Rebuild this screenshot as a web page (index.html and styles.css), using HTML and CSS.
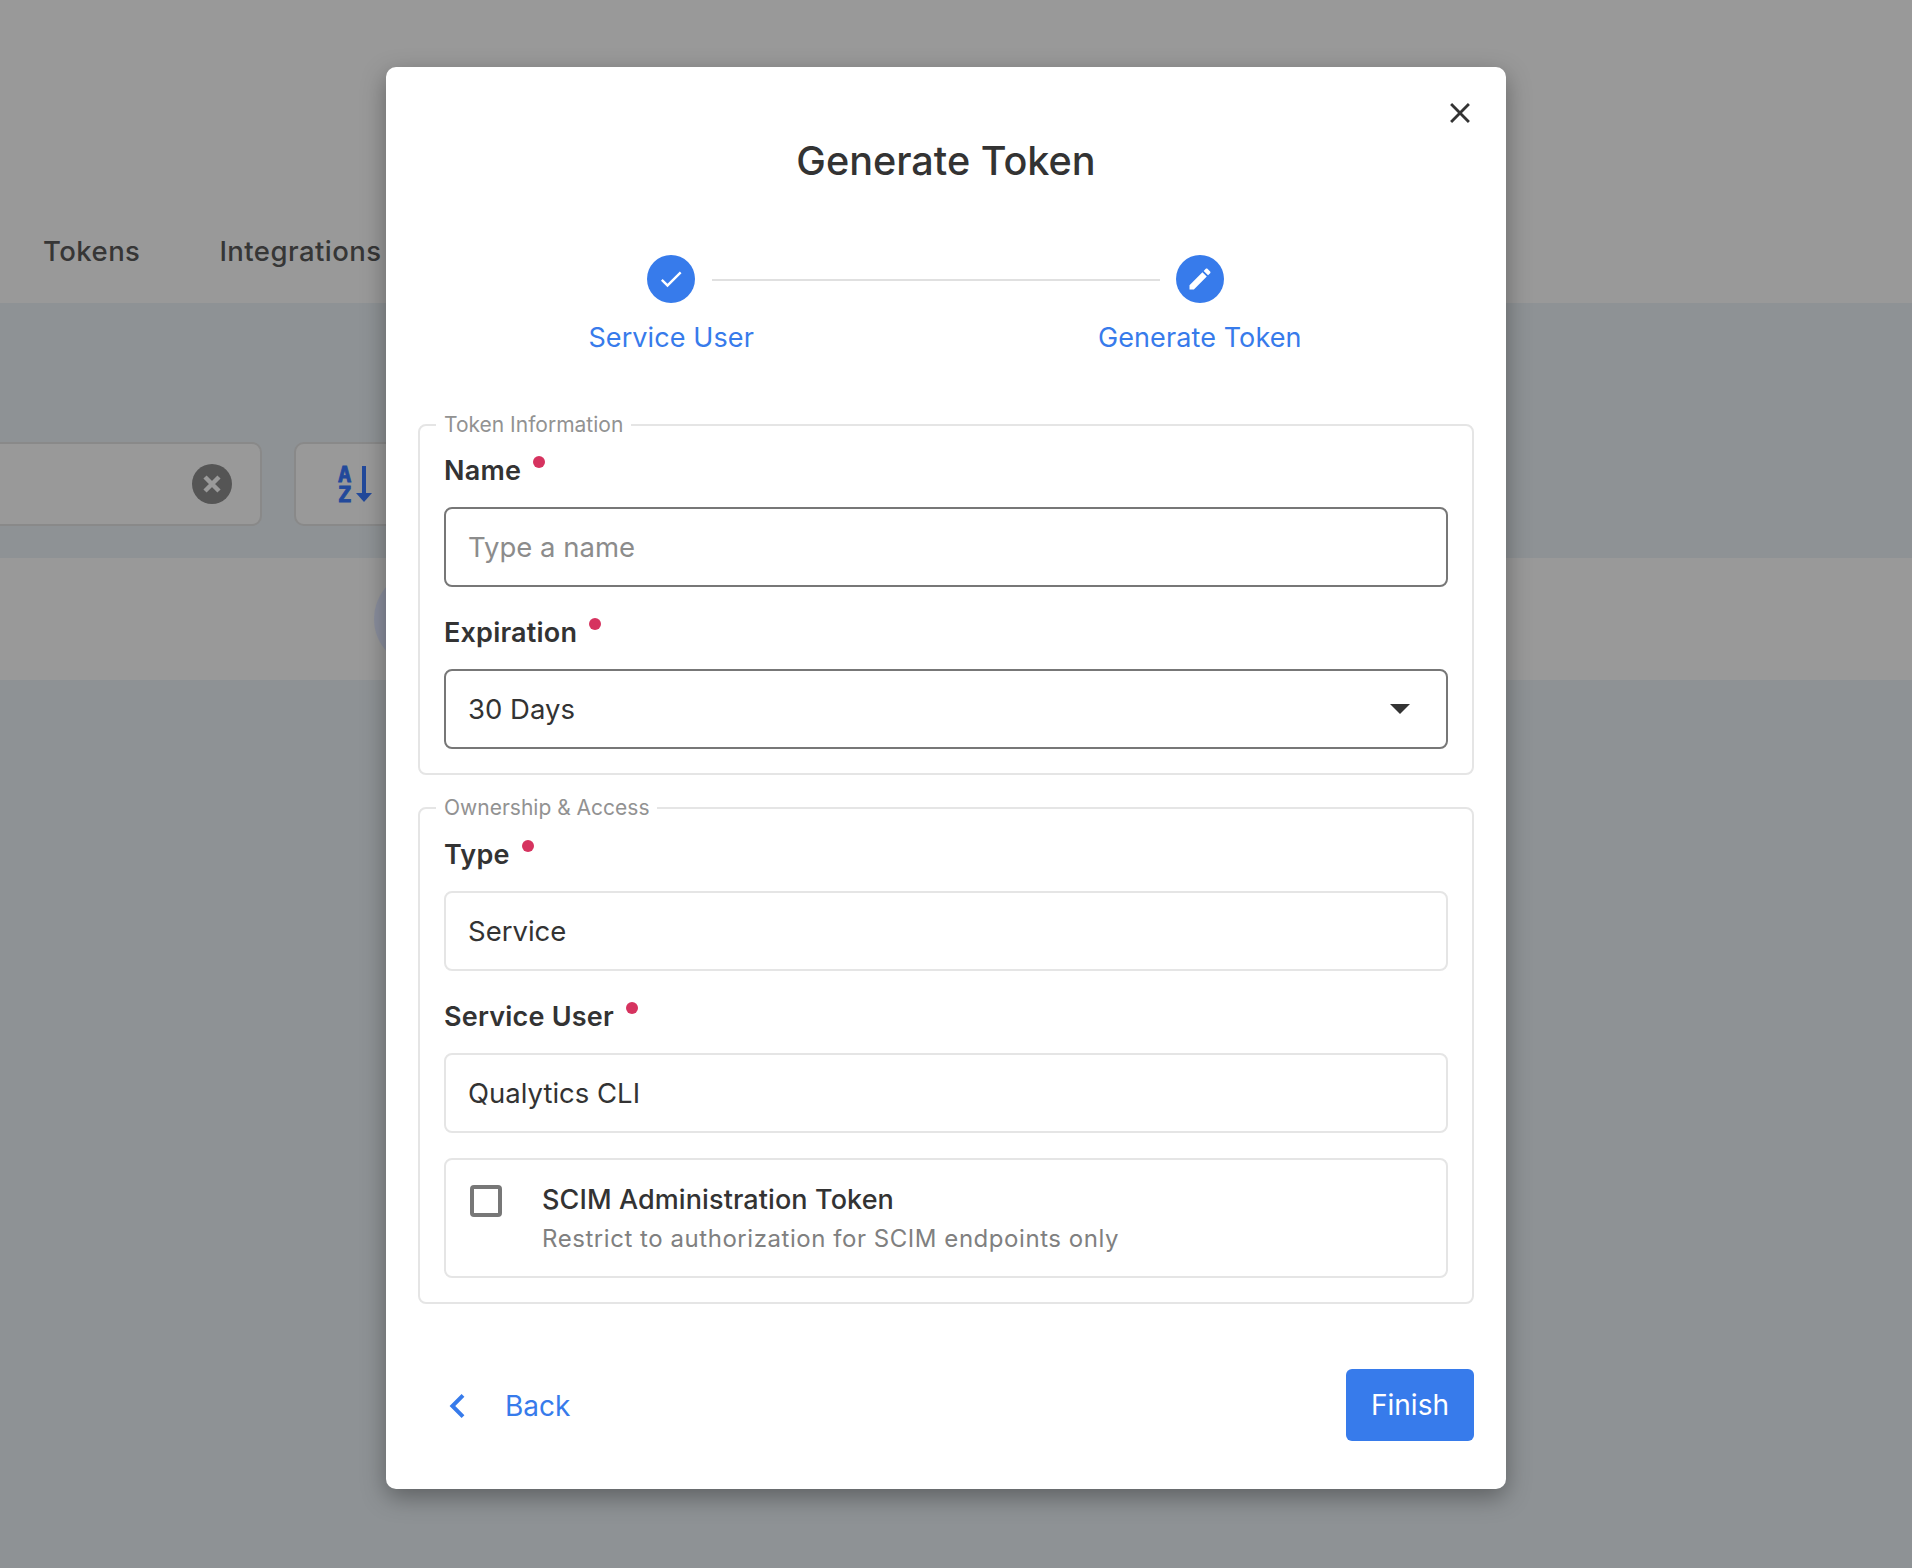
FILE: index.html
```html
<!DOCTYPE html>
<html lang="en">
<head>
<meta charset="utf-8">
<title>Generate Token</title>
<link rel="stylesheet" href="styles.css">
</head>
<body>
<div class="page">
  <nav class="tabs">
    <span class="tab">Tokens</span>
    <span class="tab">Integrations</span>
  </nav>
  <div class="toolbar">
    <div class="search">
      <svg class="clear" viewBox="0 0 40 40"><circle cx="20" cy="20" r="20" fill="#555"/><path d="M13 13l14 14M27 13L13 27" stroke="#9a9a9a" stroke-width="4.5"/></svg>
    </div>
    <div class="sort">
      <svg class="sort-icon" viewBox="0 0 36 36"><text class="sort-letter" x="0" y="16">A</text><text class="sort-letter" x="0" y="36">Z</text><path d="M26 0v30" stroke="#22499b" stroke-width="4"/><path d="M18 27h16l-8 9z" fill="#22499b"/></svg>
    </div>
  </div>
  <div class="row"><span class="avatar"></span></div>
  <div class="rest"></div>
</div>

<div class="overlay">
  <section class="modal">
    <button class="close" type="button" aria-label="Close">
      <svg viewBox="0 0 24 24"><path d="M19 6.41 17.59 5 12 10.59 6.41 5 5 6.41 10.59 12 5 17.59 6.41 19 12 13.41 17.59 19 19 17.59 13.41 12z"/></svg>
    </button>
    <h1 class="title">Generate Token</h1>

    <div class="stepper">
      <div class="step">
        <span class="step-dot"><svg viewBox="0 0 24 24"><path d="M9 16.17 4.83 12l-1.42 1.41L9 19 21 7l-1.41-1.41z"/></svg></span>
        <span class="step-label">Service User</span>
      </div>
      <span class="step-line"></span>
      <div class="step">
        <span class="step-dot"><svg viewBox="0 0 24 24"><path d="M3 17.25V21h3.75L17.81 9.94l-3.75-3.75L3 17.25zM20.71 7.04c.39-.39.39-1.02 0-1.41l-2.34-2.34c-.39-.39-1.02-.39-1.41 0l-1.83 1.83 3.75 3.75 1.83-1.83z"/></svg></span>
        <span class="step-label">Generate Token</span>
      </div>
    </div>

    <fieldset class="group">
      <legend>Token Information</legend>
      <div class="field">
        <label class="label">Name<i class="req"></i></label>
        <div class="input focus placeholder">Type a name</div>
      </div>
      <div class="field">
        <label class="label">Expiration<i class="req"></i></label>
        <div class="input focus select">30 Days<span class="caret"></span></div>
      </div>
    </fieldset>

    <fieldset class="group">
      <legend>Ownership &amp; Access</legend>
      <div class="field">
        <label class="label">Type<i class="req"></i></label>
        <div class="input">Service</div>
      </div>
      <div class="field">
        <label class="label">Service User<i class="req"></i></label>
        <div class="input">Qualytics CLI</div>
      </div>
      <div class="scim">
        <span class="checkbox"></span>
        <div class="scim-text">
          <div class="scim-title">SCIM Administration Token</div>
          <div class="scim-sub">Restrict to authorization for SCIM endpoints only</div>
        </div>
      </div>
    </fieldset>

    <footer class="actions">
      <button class="back" type="button">
        <svg viewBox="8 6 7.41 12"><path d="M15.41 7.41 14 6l-6 6 6 6 1.41-1.41L10.83 12z"/></svg>
        <span>Back</span>
      </button>
      <button class="finish" type="button">Finish</button>
    </footer>
  </section>
</div>
</body>
</html>
```

FILE: styles.css
```css
* { box-sizing: border-box; }
html, body { margin: 0; height: 100%; }
body {
  position: relative;
  height: 1568px;
  overflow: hidden;
  font-family: Inter, "Noto Sans", sans-serif;
  color: #333;
  background: #8e9295;
}

/* dimmed page behind the dialog */
.page { display: flex; flex-direction: column; height: 100%; }
.tabs {
  height: 303px;
  background: #999;
  display: flex;
  gap: 79px;
  padding: 231px 0 0 43px;
}
.tab { font-size: 27.5px; line-height: 40px; font-weight: 500; letter-spacing: .45px; color: #363636; }
.toolbar {
  height: 255px;
  background: #8e9295;
  display: flex;
  gap: 32px;
  padding-top: 139px;
  margin-left: -19px;
}
.search, .sort {
  height: 84px;
  background: #999;
  border: 2px solid #898989;
  border-radius: 10px;
  display: flex;
  align-items: center;
}
.search { width: 281px; justify-content: flex-end; padding-right: 28px; }
.clear { width: 40px; height: 40px; }
.sort { width: 120px; padding-left: 42px; }
.sort-icon { width: 36px; height: 36px; overflow: visible; }
.sort-letter {
  font-family: "DejaVu Sans Mono", monospace;
  font-weight: 700;
  font-size: 22px;
  fill: #22499b;
  stroke: #22499b;
  stroke-width: .8px;
}
.row {
  height: 122px;
  background: #999;
  display: flex;
  align-items: center;
  padding-left: 374px;
}
.avatar { width: 96px; height: 96px; border-radius: 50%; background: #8b8f9e; }
.rest { flex: 1; background: #8e9295; }

/* dialog */
.overlay { position: absolute; inset: 0; padding: 67px 0 0 386px; }
.modal {
  position: relative;
  width: 1120px;
  height: 1422px;
  background: #fff;
  border-radius: 10px;
  padding: 67px 32px 0;
  box-shadow: 0 8px 24px rgba(0, 0, 0, .35);
}
.close {
  position: absolute;
  top: 29px;
  right: 29px;
  width: 34px;
  height: 34px;
  padding: 0;
  border: 0;
  background: none;
}
.close svg { display: block; width: 34px; height: 34px; fill: #333; }
.title {
  margin: 0 0 67px;
  text-align: center;
  font-size: 39.6px;
  line-height: 54px;
  font-weight: 500;
  color: #333;
}

.stepper { display: flex; width: fit-content; margin: 0 auto 57px; padding-right: 2px; }
.step { display: flex; flex-direction: column; align-items: center; gap: 17px; }
.step-dot {
  width: 48px;
  height: 48px;
  border-radius: 50%;
  background: #377beb;
  display: flex;
  align-items: center;
  justify-content: center;
}
.step-dot svg { width: 28px; height: 28px; fill: #fff; }
.step-label { font-size: 27px; line-height: 36px; letter-spacing: .1px; color: #377beb; white-space: nowrap; }
.step-line {
  width: 448px;
  height: 2px;
  margin: 24px -62px 0 -42px;
  background: #e0e0e0;
}

.group {
  margin: 0 0 21px;
  padding: 17px 24px 24px;
  border: 2px solid #e5e5e5;
  border-radius: 8px;
  min-width: 0;
}
.group + .group { padding-top: 18px; margin-bottom: 65px; }
legend {
  margin-left: -8px;
  padding: 0 8px;
  font-size: 21px;
  line-height: 24px;
  color: #929292;
}
.field + .field { margin-top: 29px; }
.label {
  display: block;
  height: 34px;
  margin-bottom: 19px;
  font-size: 27px;
  line-height: 34px;
  font-weight: 600;
  letter-spacing: .2px;
  color: #333;
}
.req {
  display: inline-block;
  width: 12px;
  height: 12px;
  margin-left: 12px;
  border-radius: 50%;
  background: #d6335f;
  vertical-align: 12px;
}
.input {
  display: flex;
  align-items: center;
  height: 80px;
  padding: 0 22px;
  border: 2px solid #e5e5e5;
  border-radius: 8px;
  font-size: 27.5px;
  color: #333;
}
.focus { border-color: #777; }
.placeholder { color: #8c8c8c; }
.select { justify-content: space-between; padding-right: 36px; }
.caret {
  width: 0;
  height: 0;
  border-left: 10px solid transparent;
  border-right: 10px solid transparent;
  border-top: 10px solid #333;
}

.scim {
  display: flex;
  align-items: flex-start;
  gap: 40px;
  height: 120px;
  margin-top: 25px;
  padding: 25px 24px;
  border: 2px solid #e5e5e5;
  border-radius: 8px;
}
.checkbox {
  flex: none;
  width: 32px;
  height: 32px;
  border: 4px solid #777;
  border-radius: 4px;
}
.scim-title { font-size: 27px; line-height: 30px; font-weight: 500; letter-spacing: .1px; color: #333; }
.scim-sub { margin-top: 9px; font-size: 24px; line-height: 30px; letter-spacing: .55px; color: #808080; }

.actions { display: flex; justify-content: space-between; align-items: center; }
.back {
  display: flex;
  align-items: center;
  gap: 40px;
  padding: 2px 0 0 31px;
  border: 0;
  background: none;
  font: inherit;
  font-size: 28px;
  color: #377beb;
}
.back svg { width: 16px; height: 24px; fill: #377beb; }
.finish {
  width: 128px;
  height: 72px;
  border: 0;
  border-radius: 6px;
  background: #377beb;
  color: #fff;
  font: inherit;
  font-size: 28px;
  font-weight: 400;
}
```
